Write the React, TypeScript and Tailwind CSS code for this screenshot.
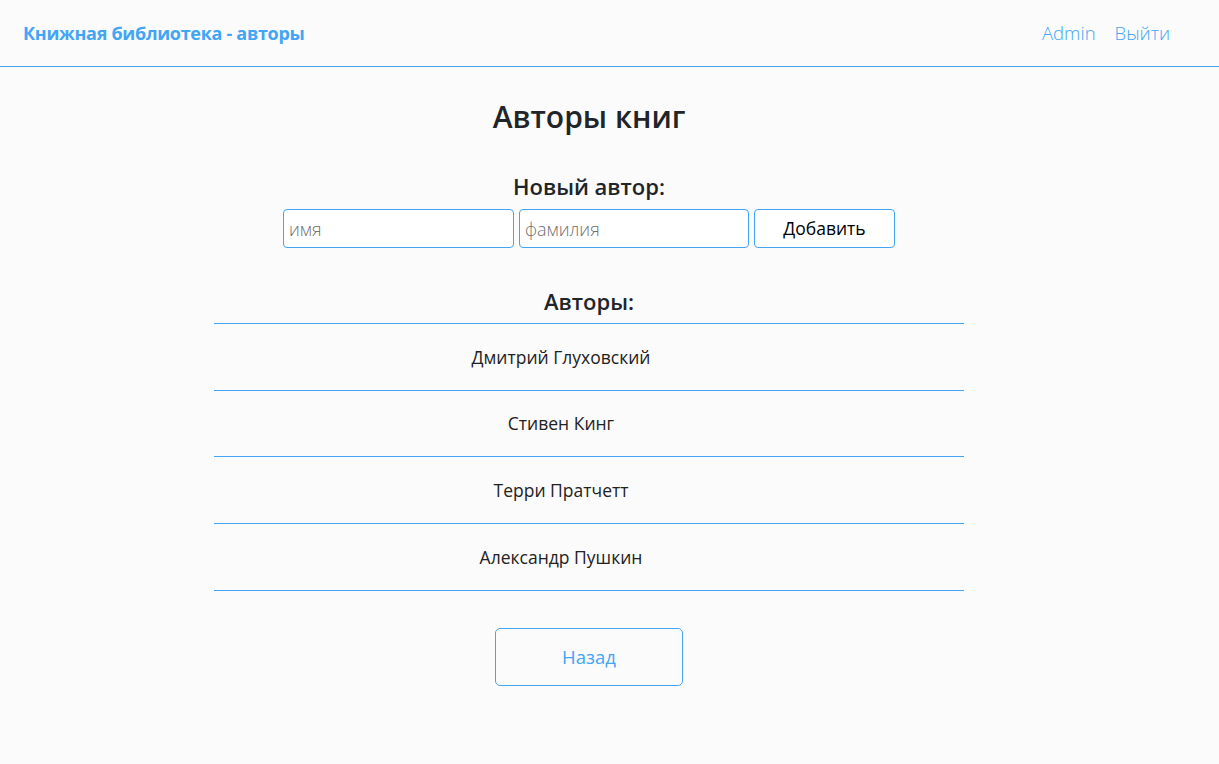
import React, { useState } from 'react';

type Author = { id: number; firstName: string; lastName: string };

const INITIAL_AUTHORS: Author[] = [
  { id: 1, firstName: 'Дмитрий', lastName: 'Глуховский' },
  { id: 2, firstName: 'Стивен', lastName: 'Кинг' },
  { id: 3, firstName: 'Терри', lastName: 'Пратчетт' },
  { id: 4, firstName: 'Александр', lastName: 'Пушкин' },
];

const FONT = { fontFamily: '"Open Sans", "Noto Sans", sans-serif' };

export default function App() {
  const [authors, setAuthors] = useState<Author[]>(INITIAL_AUTHORS);
  const [firstName, setFirstName] = useState('');
  const [lastName, setLastName] = useState('');

  const handleAdd = () => {
    if (!firstName.trim() || !lastName.trim()) return;
    setAuthors([...authors, { id: Date.now(), firstName: firstName.trim(), lastName: lastName.trim() }]);
    setFirstName('');
    setLastName('');
  };

  return (
    <div className="min-h-[764px] bg-[#fbfbfb] text-[#212529]" style={FONT}>
      <header className="h-[67px] border-b border-[#42a5f5] flex items-center justify-between pl-[23px] pr-[49px]">
        <span className="text-[18px] font-bold text-[#42a5f5] tracking-[-0.3px]">Книжная библиотека - авторы</span>
        <nav className="flex items-center gap-[19px] text-[18.5px] text-[#42a5f5] font-light">
          <a href="#">Admin</a>
          <a href="#">Выйти</a>
        </nav>
      </header>

      <main className="w-[1178px] flex flex-col items-center">
        <h1 className="mt-[28px] text-[30px] font-semibold leading-[44px]">Авторы книг</h1>

        <h2 className="mt-[32px] text-[22px] font-semibold leading-[30px]">Новый автор:</h2>
        <div className="mt-[8px] flex gap-[5px]">
          <input
            type="text"
            placeholder="имя"
            value={firstName}
            onChange={(e) => setFirstName(e.target.value)}
            className="w-[231px] h-[39px] px-[5px] bg-white border border-[#42a5f5] rounded-[4px] text-[18px] font-light placeholder:text-[#6f6f6f] outline-none"
          />
          <input
            type="text"
            placeholder="фамилия"
            value={lastName}
            onChange={(e) => setLastName(e.target.value)}
            className="w-[230px] h-[39px] px-[5px] bg-white border border-[#42a5f5] rounded-[4px] text-[18px] font-light placeholder:text-[#6f6f6f] outline-none"
          />
          <button
            type="button"
            onClick={handleAdd}
            className="w-[141px] h-[39px] bg-white border border-[#42a5f5] rounded-[4px] text-[17.5px] text-black"
          >
            Добавить
          </button>
        </div>

        <h2 className="mt-[38px] text-[22px] font-semibold leading-[30px]">Авторы:</h2>
        <ul className="mt-[7px] w-[750px] border-t border-[#42a5f5]">
          {authors.map((a) => (
            <li
              key={a.id}
              className="h-[66.7px] border-b border-[#42a5f5] flex items-center justify-center pr-[56px] text-[17.5px] text-[#222]"
            >
              {a.firstName} {a.lastName}
            </li>
          ))}
        </ul>

        <button
          type="button"
          className="mt-[37px] w-[188px] h-[58px] border border-[#42a5f5] rounded-[5px] text-[18.5px] text-[#42a5f5]"
        >
          Назад
        </button>
      </main>
    </div>
  );
}
